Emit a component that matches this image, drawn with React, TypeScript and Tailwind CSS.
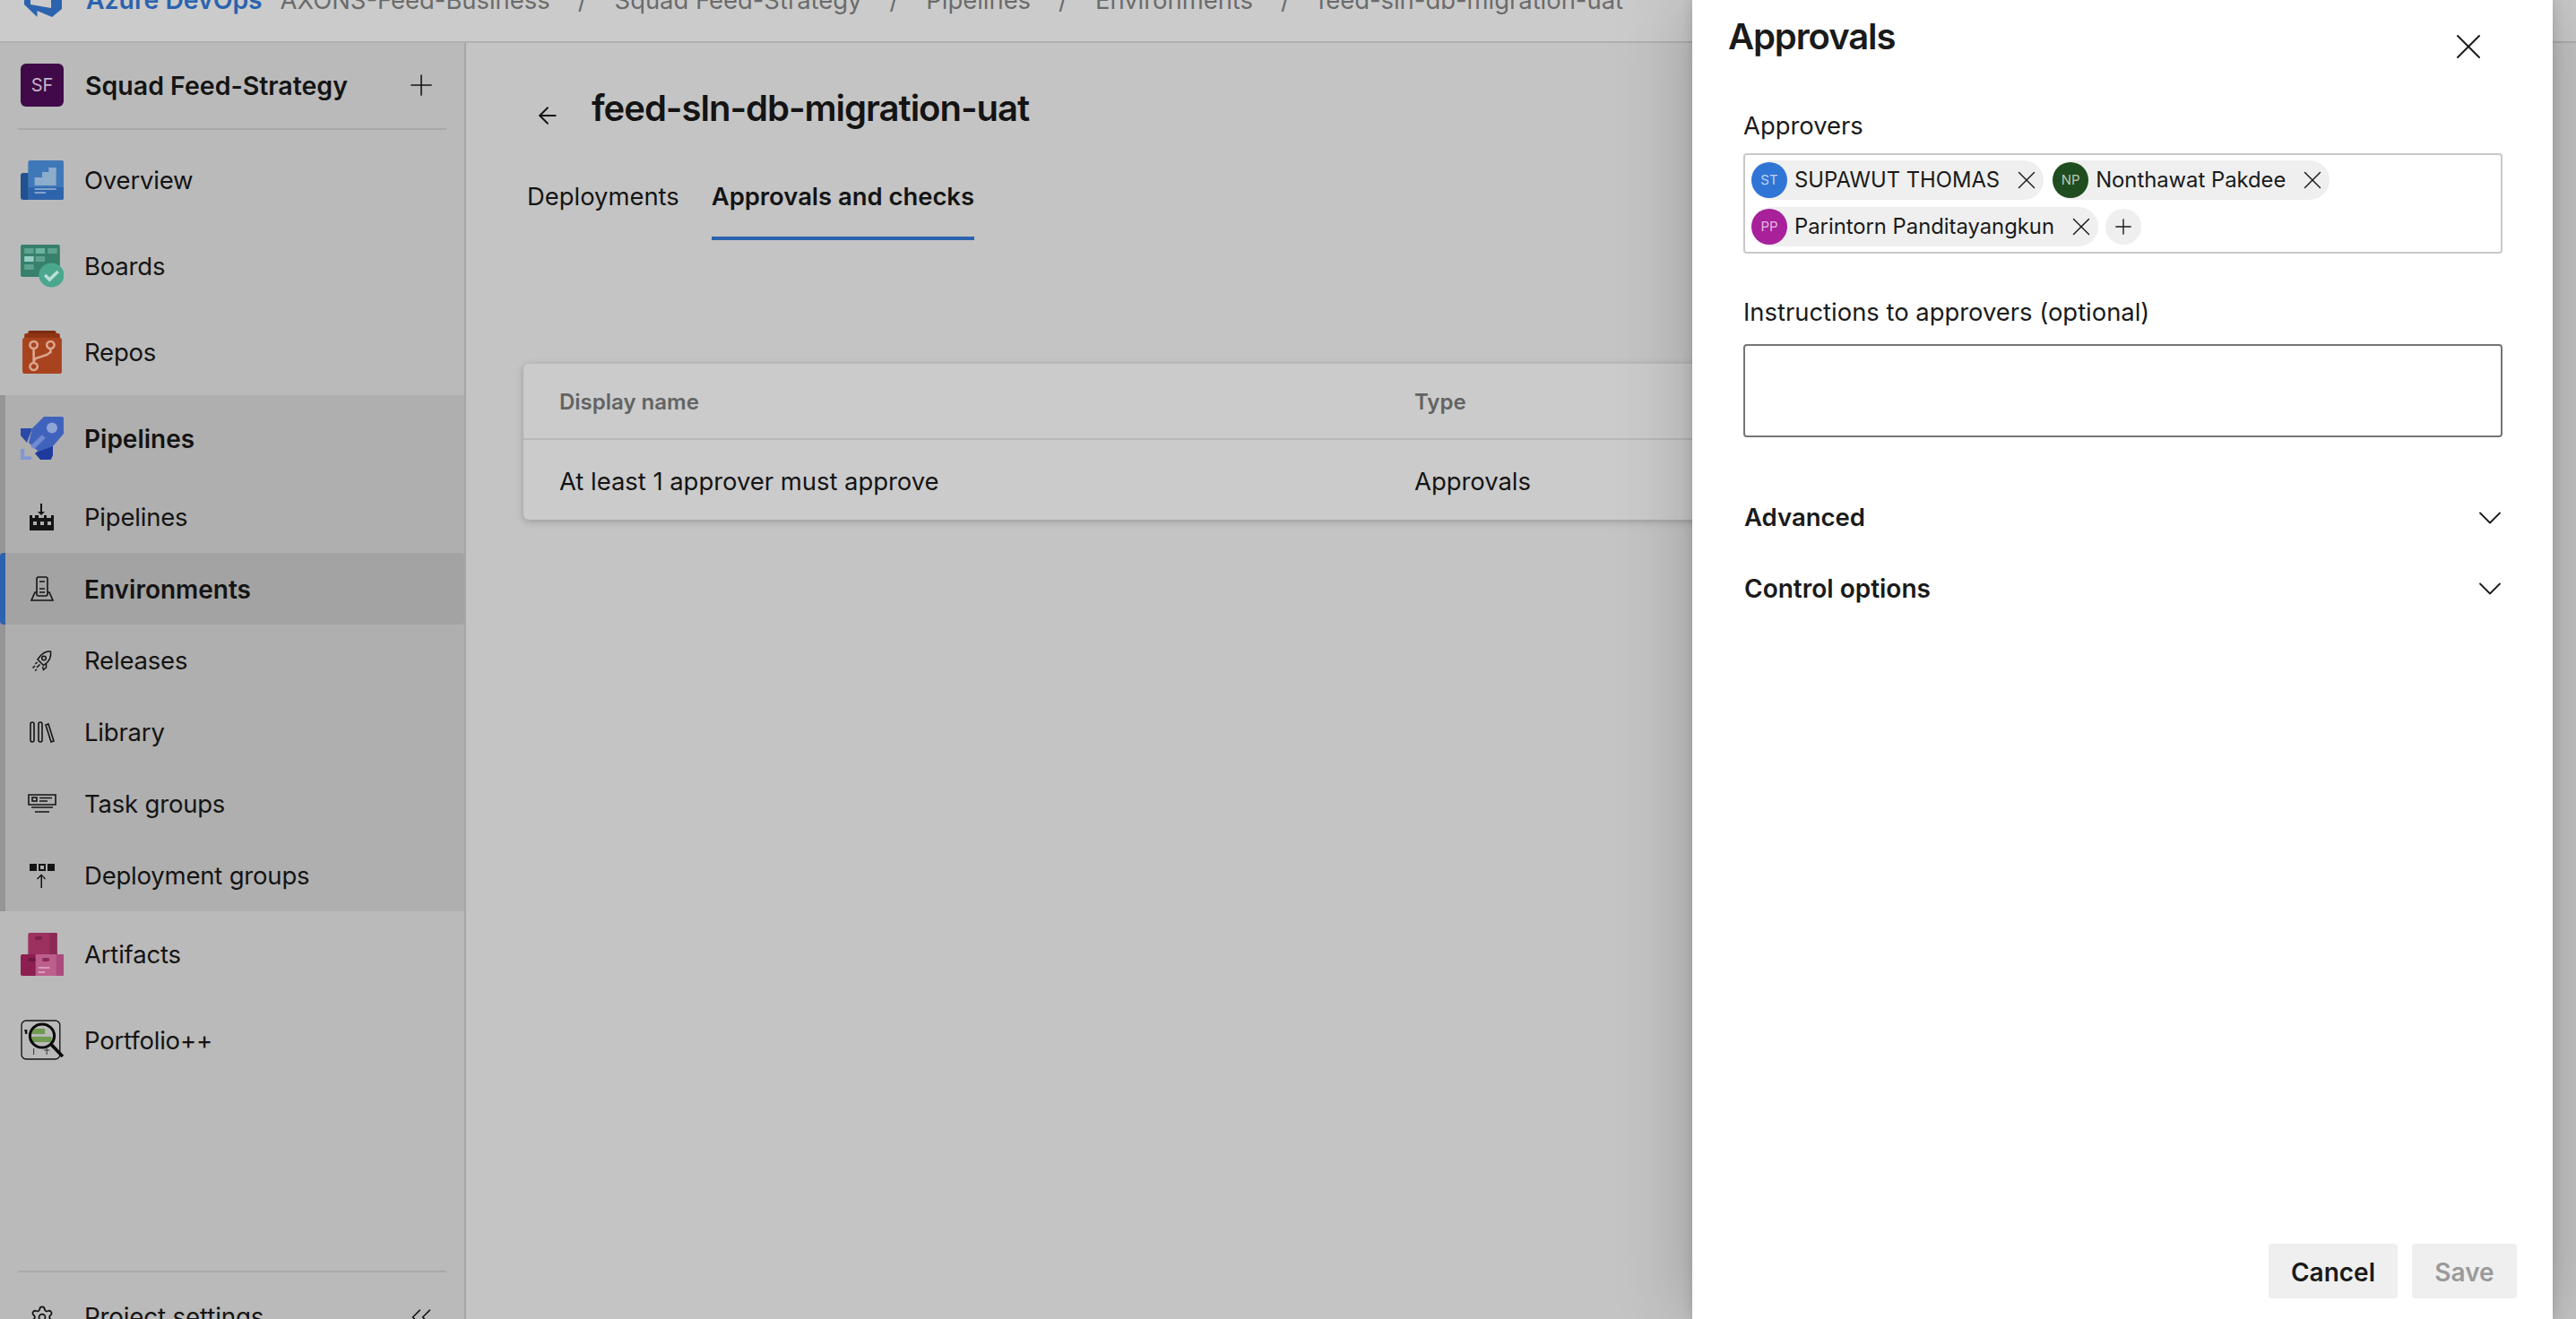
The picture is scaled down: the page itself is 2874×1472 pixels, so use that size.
import React from "react";
import { ArrowLeft, ChevronDown, ChevronsLeft, Plus, Settings, X } from "lucide-react";

const font = "font-['Inter','Liberation_Sans',sans-serif]";

const OverviewIcon = () => (
  <svg width="48" height="44" viewBox="0 0 46 44" preserveAspectRatio="none">
    <rect x="0" y="14" width="12" height="30" rx="3" fill="#23518f" />
    <rect x="8" y="0" width="38" height="44" rx="2" fill="#3f78b8" />
    <path d="M8 30h38v12a2 2 0 0 1-2 2H8z" fill="#2d64ac" />
    <path d="M15 19h8v-6h7V8h8v20H15z" fill="#8eaccb" />
    <rect x="15" y="31" width="23" height="2" fill="#7fa3cb" />
    <rect x="15" y="35" width="12" height="2" fill="#7fa3cb" />
  </svg>
);

const BoardsIcon = () => (
  <svg width="48" height="48" viewBox="0 0 46 48" preserveAspectRatio="none">
    <rect x="0" y="0" width="42" height="36" rx="2" fill="#37806c" />
    <rect x="4" y="4" width="10" height="6" fill="#5ea28f" />
    <rect x="16" y="4" width="10" height="6" fill="#6db3a1" />
    <rect x="29" y="4" width="10" height="6" fill="#5ea28f" />
    <rect x="4" y="13" width="10" height="6" fill="#97d0c3" />
    <rect x="16" y="13" width="10" height="6" fill="#5ea28f" />
    <rect x="4" y="22" width="10" height="6" fill="#5ea28f" />
    <circle cx="33" cy="34" r="13.500" fill="#4ba78e" />
    <path d="M26 34l5 5 9-9" fill="none" stroke="#b9e0d5" strokeWidth="3.500" />
  </svg>
);

const ReposIcon = () => (
  <svg width="48" height="48" viewBox="0 0 46 48" preserveAspectRatio="none">
    <rect x="8" y="0" width="30" height="6" rx="2" fill="#7e2b12" />
    <rect x="4" y="3" width="38" height="8" rx="2" fill="#8f3415" />
    <rect x="2" y="8" width="42" height="40" rx="2" fill="#a8431f" />
    <g fill="none" stroke="#dba68f" strokeWidth="2.500">
      <circle cx="14" cy="16" r="4" />
      <circle cx="32" cy="16" r="4" />
      <circle cx="14" cy="40" r="4" />
      <path d="M14 20v16M32 20v4l-4 3-12 4-2 3" />
    </g>
  </svg>
);

const PipelinesIcon = () => (
  <svg width="48" height="48" viewBox="0 0 48 48">
    <path d="M0 13H13L7 29 0 21z" fill="#2b4aa8" />
    <path d="M36 26V43L33.700 48H22L16 41z" fill="#1e3a9c" />
    <path d="M13 13L26 0H46a2 2 0 0 1 2 2V19L36 33 20 39 9 29z" fill="#3f63bd" />
    <circle cx="35" cy="12.500" r="6" fill="#8ea3d6" />
    <path d="M23.700 20.300L27.700 23.700 15.300 36 11 32.700z" fill="#7189cf" />
    <path d="M0 36H4.300V44.300H12V48H0z" fill="#8296d2" />
  </svg>
);

const ArtifactsIcon = () => (
  <svg width="48" height="48" viewBox="0 0 46 48" preserveAspectRatio="none">
    <rect x="8" y="0" width="31" height="26" rx="2" fill="#9c305f" />
    <rect x="31" y="0" width="8" height="26" fill="#8a2a54" />
    <rect x="15" y="4" width="8" height="4" rx="2" fill="#7c2049" />
    <rect x="0" y="24" width="46" height="24" rx="2" fill="#8c1f50" />
    <rect x="16" y="24" width="30" height="24" fill="#bd5f8d" />
    <rect x="38" y="24" width="8" height="24" fill="#aa4b7c" />
    <rect x="8" y="28" width="8" height="4" rx="2" fill="#6c173e" />
    <rect x="23" y="28" width="8" height="4" rx="2" fill="#8c2a5a" />
    <rect x="19" y="38" width="12" height="2" fill="#d89cb9" />
    <rect x="19" y="43" width="7" height="2" fill="#d89cb9" />
  </svg>
);

const PortfolioIcon = () => (
  <svg width="48" height="46" viewBox="0 0 46 46" preserveAspectRatio="none">
    <rect x="1" y="1" width="41" height="43" rx="5" fill="none" stroke="#141414" strokeWidth="1.300" />
    <rect x="12" y="10" width="14" height="6" fill="#6f9a4f" />
    <rect x="12" y="16" width="20" height="3" fill="#b7b7b7" />
    <rect x="12" y="19" width="21" height="6" fill="#6f9a4f" />
    <path d="M4 11h3v5H5z" fill="#141414" />
    <circle cx="23" cy="18" r="13" fill="none" stroke="#0a0a0a" strokeWidth="3" />
    <path d="M33 28l12 13" stroke="#0a0a0a" strokeWidth="3.500" />
    <path d="M14 32v7M28 32v7M25 34h6" stroke="#3a3a3a" strokeWidth="1" />
  </svg>
);

const SubPipelinesIcon = () => (
  <svg width="28" height="30" viewBox="0 0 28 30" fill="#141414">
    <path d="M12 0h2v9h3l-4 4-4-4h3z" />
    <path d="M0 13h3v3h3v-3h4v3h6v-3h3v3h5v-3h3v17H0zM4 20v4h4v-4zM12 24h4v-4h-4zM20 20v4h4v-4z" fillRule="evenodd" />
  </svg>
);

const EnvironmentsIcon = () => (
  <svg width="26" height="28" viewBox="0 0 26 28" fill="none" stroke="#141414" strokeWidth="1.600">
    <rect x="7" y="1" width="12" height="21" rx="2" />
    <path d="M10 6h6M10 14h6M10 18h6" />
    <path d="M7 18H5L1 27h24l-4-9h-2" />
  </svg>
);

const ReleasesIcon = () => (
  <svg width="24" height="24" viewBox="0 0 24 24" fill="none" stroke="#141414" strokeWidth="1.500">
    <path d="M21.500 2c.6 5-.5 9-4 12.500l-4 3-6.500-6.500 3-4C13.500 3 17 1.500 21.500 2z" />
    <circle cx="14" cy="9.500" r="2.300" />
    <path d="M6.500 14l-2 2M9.500 16.500l-3.500 3.500M4 18l-2.500 2.500M6 22l-2 1.500" />
    <path d="M16.500 15.500V20l-3 2.500-1-3.500" />
  </svg>
);

const LibraryIcon = () => (
  <svg width="28" height="24" viewBox="0 0 28 24" fill="none" stroke="#141414" strokeWidth="1.600">
    <rect x="1" y="1" width="4" height="22" rx="2" />
    <rect x="10" y="1" width="4" height="22" rx="2" />
    <path d="M18 4l3-1 6 19-3 1z" />
  </svg>
);

const TaskGroupsIcon = () => (
  <svg width="32" height="22" viewBox="0 0 32 22" fill="none" stroke="#141414" strokeWidth="1.600">
    <path d="M1 1h30v11H1z" />
    <rect x="5" y="4" width="5" height="4" />
    <path d="M13 4.500h14M13 8h9M4 15h24M8 20h16" />
  </svg>
);

const DeploymentGroupsIcon = () => (
  <svg width="28" height="27" viewBox="0 0 28 27" fill="#141414">
    <rect x="0" y="0" width="8" height="8" />
    <path d="M10 0h8v8h-8zM12 2v4h4V2z" fillRule="evenodd" />
    <rect x="20" y="0" width="8" height="8" />
    <path d="M12.500 27v-13l-3.500 3.500-1-1L13 11.500l5 5-1 1-3-3.500v13z" />
  </svg>
);

type NavItem = { label: string; icon: React.ReactNode; active?: boolean };

const subItems: NavItem[] = [
  { label: "Pipelines", icon: <SubPipelinesIcon /> },
  { label: "Environments", icon: <EnvironmentsIcon />, active: true },
  { label: "Releases", icon: <ReleasesIcon /> },
  { label: "Library", icon: <LibraryIcon /> },
  { label: "Task groups", icon: <TaskGroupsIcon /> },
  { label: "Deployment groups", icon: <DeploymentGroupsIcon /> },
];

const TopRow = ({ label, icon, bold }: { label: string; icon: React.ReactNode; bold?: boolean }) => (
  <div className="flex h-[96px] items-center">
    <div className="flex w-[94px] shrink-0 justify-center">{icon}</div>
    <span className={`pt-[2px] text-[#141414] ${bold ? "text-[28px] font-semibold" : "text-[27.5px] tracking-[-0.2px]"}`}>{label}</span>
  </div>
);

const Sidebar = () => (
  <aside className="flex h-full w-[520px] shrink-0 flex-col border-r-[2px] border-[#a6a6a6] bg-[#bababa]">
    <div className="mt-[23px] flex h-[48px] items-center pl-[23px] pr-[29px]">
      <div className="flex h-[48px] w-[48px] items-center justify-center rounded-[6px] bg-[#3f0a47] text-[20px] text-[#c4b4c6]">SF</div>
      <span className="ml-[24px] pt-[2px] text-[28.500px] font-semibold text-[#141414]">Squad Feed-Strategy</span>
      <Plus className="ml-auto text-[#141414]" size={38} strokeWidth={1} />
    </div>
    <div className="mx-[20px] mt-[24px] h-[2px] bg-[#a8a8a8]" />

    <div className="mt-[8px]">
      <TopRow label="Overview" icon={<OverviewIcon />} />
      <TopRow label="Boards" icon={<BoardsIcon />} />
      <TopRow label="Repos" icon={<ReposIcon />} />
    </div>

    <div className="relative bg-[#afafaf]">
      <div className="absolute inset-y-0 left-0 w-[6px] bg-[#959595]" />
      <TopRow label="Pipelines" icon={<PipelinesIcon />} bold />
      {subItems.map((item) => (
        <div
          key={item.label}
          className={`relative flex h-[80px] items-center ${item.active ? "rounded-[4px] bg-[#a3a3a3]" : ""}`}
        >
          {item.active && <div className="absolute inset-y-0 left-0 w-[6px] rounded-l-[4px] bg-[#2b63ae]" />}
          <div className="flex w-[94px] shrink-0 justify-center">{item.icon}</div>
          <span className={`pt-[2px] text-[#141414] ${item.active ? "text-[28px] font-semibold" : "text-[27.5px] tracking-[-0.2px]"}`}>{item.label}</span>
        </div>
      ))}
    </div>

    <div>
      <TopRow label="Artifacts" icon={<ArtifactsIcon />} />
      <TopRow label="Portfolio++" icon={<PortfolioIcon />} />
    </div>

    <div className="mx-[20px] mt-auto h-[2px] shrink-0 bg-[#a8a8a8]" />
    {/* this row runs past the bottom of the window, as in the capture */}
    <div className="-mb-[48px] flex h-[100px] shrink-0 items-center pr-[29px]">
      <div className="flex w-[94px] justify-center">
        <Settings size={28} strokeWidth={1.500} className="text-[#141414]" />
      </div>
      <span className="pt-[2px] text-[27.8px] tracking-[-0.2px] text-[#141414]">Project settings</span>
      <ChevronsLeft className="ml-auto text-[#141414]" size={38} strokeWidth={1} />
    </div>
  </aside>
);

const crumbs = ["AXONS-Feed-Business", "Squad Feed-Strategy", "Pipelines", "Environments", "feed-sln-db-migration-uat"];

const TopBar = () => (
  <header className="flex h-[48px] shrink-0 items-start overflow-hidden border-b-[2px] border-[#b0b0b0] bg-[#cbcbcb] pl-[27px]">
    <svg width="42" height="20" viewBox="0 0 42 20" className="shrink-0">
      <path d="M0 0H7V5L30 9V0H42V10L31 19 14.500 12V19L0 5z" fill="#2b63ae" />
    </svg>
    <div className="-mt-[17px] ml-[27px] flex items-center text-[27.4px] leading-[34px]">
      <span className="text-[28.300px] font-semibold text-[#2b63ae]">Azure DevOps</span>
      {crumbs.map((c, i) => (
        <React.Fragment key={c}>
          {i > 0 && <span className="mx-[31px] text-[#6b6b6b]">/</span>}
          <span className={`text-[#6b6b6b] ${i === 0 ? "ml-[20px]" : ""}`}>{c}</span>
        </React.Fragment>
      ))}
    </div>
  </header>
);

const Main = () => (
  <main className="min-w-0 flex-1 bg-[#c4c4c4] pl-[64px] pr-[40px]">
    <div className="mt-[43px] flex items-center">
      <ArrowLeft className="ml-[12px] mt-[16px] text-[#141414]" size={30} strokeWidth={1.500} />
      <h1 className="ml-[34px] text-[40px] font-semibold tracking-[-1px] text-[#141414]">feed-sln-db-migration-uat</h1>
    </div>
    <div className="mt-[48px] flex items-start gap-[36px] text-[27.4px]">
      <span className="pl-[4px] text-[#141414]">Deployments</span>
      <span className="border-b-[4px] border-[#2b63ae] pb-[24px] font-semibold text-[#141414]">Approvals and checks</span>
    </div>
    <div className="mt-[138px] overflow-hidden rounded-[6px] bg-[#cbcbcb] shadow-[0_2px_8px_rgba(0,0,0,0.22)]">
      <div className="flex h-[85px] items-center border-b-[2px] border-[#b8b8b8] pl-[40px] pt-[2px] text-[24px] font-semibold text-[#636363]">
        <span className="w-[954px]">Display name</span>
        <span>Type</span>
      </div>
      <div className="flex h-[89px] items-center pl-[40px] pt-[3px] text-[27.4px] text-[#141414]">
        <span className="w-[954px]">At least 1 approver must approve</span>
        <span>Approvals</span>
      </div>
    </div>
  </main>
);

const Chip = ({ initials, name, color }: { initials: string; name: string; color: string }) => (
  <div className="flex h-[44px] items-center rounded-full bg-[#efefef] pr-[2px]">
    <div className={`flex h-[40px] w-[40px] items-center justify-center rounded-full text-[15px] text-white/70 ${color}`}>{initials}</div>
    <span className="ml-[8px] text-[23.8px] text-[#1a1a1a]">{name}</span>
    <X className="ml-[13px] text-[#1a1a1a]" size={34} strokeWidth={1} />
  </div>
);

const Panel = () => (
  <div className="absolute bottom-0 left-[1888px] top-0 flex w-[960px] flex-col bg-white pb-[23px] shadow-[0_0_12px_rgba(0,0,0,0.14),0_0_80px_rgba(0,0,0,0.22)]">
    <div className="flex items-start justify-between pl-[40px] pr-[70px]">
      <h2 className="mt-[16px] text-[40px] font-semibold leading-[50px] tracking-[-1.1px] text-[#1a1a1a]">Approvals</h2>
      <X className="mt-[28px] text-[#1a1a1a]" size={48} strokeWidth={1} />
    </div>
    <div className="mt-[47px] pl-[57px] pr-[56px]">
      <label className="block text-[27.4px] leading-[34px] text-[#1a1a1a]">Approvers</label>
      <div className="mt-[14px] flex h-[112px] flex-wrap content-start items-center gap-x-[10px] gap-y-[8px] rounded-[4px] border-[2px] border-[#c8c8c8] px-[7px] pt-[6px]">
        <Chip initials="ST" name="SUPAWUT THOMAS" color="bg-[#2f75d6]" />
        <Chip initials="NP" name="Nonthawat Pakdee" color="bg-[#1f4d1f]" />
        <Chip initials="PP" name="Parintorn Panditayangkun" color="bg-[#a8209a]" />
        <div className="-ml-[2px] flex h-[40px] w-[40px] items-center justify-center rounded-full bg-[#efefef]">
          <Plus className="text-[#1a1a1a]" size={28} strokeWidth={1.200} />
        </div>
      </div>
      <label className="mt-[48px] block text-[27.4px] leading-[34px] text-[#1a1a1a]">Instructions to approvers (optional)</label>
      <div className="mt-[19px] h-[104px] rounded-[4px] border-[2px] border-[#757575]" />
      <div className="mt-[49px] flex h-[80px] items-center justify-between pl-[1px] pt-[1px] text-[27.5px] font-semibold text-[#1a1a1a]">
        <span>Advanced</span>
        <ChevronDown size={44} strokeWidth={1} className="-mr-[8px]" />
      </div>
      <div className="flex h-[80px] items-center justify-between pl-[1px] text-[28px] font-semibold text-[#1a1a1a]">
        <span>Control options</span>
        <ChevronDown size={44} strokeWidth={1} className="-mr-[8px]" />
      </div>
    </div>
    <div className="mt-auto flex justify-end gap-[16px] pr-[40px]">
      <button className="flex h-[61px] w-[144px] items-center justify-center rounded-[4px] bg-[#efefef] pt-[3px] text-[28px] font-semibold text-[#1a1a1a]">Cancel</button>
      <button className="flex h-[61px] w-[117px] items-center justify-center rounded-[4px] bg-[#efefef] pt-[3px] text-[28px] font-semibold text-[#9a9a9a]">Save</button>
    </div>
  </div>
);

export default function App() {
  return (
    <div className={`relative flex h-[1472px] w-[2874px] flex-col overflow-hidden bg-[#c4c4c4] ${font}`}>
      <TopBar />
      <div className="flex min-h-0 flex-1">
        <Sidebar />
        <Main />
      </div>
      <Panel />
    </div>
  );
}
